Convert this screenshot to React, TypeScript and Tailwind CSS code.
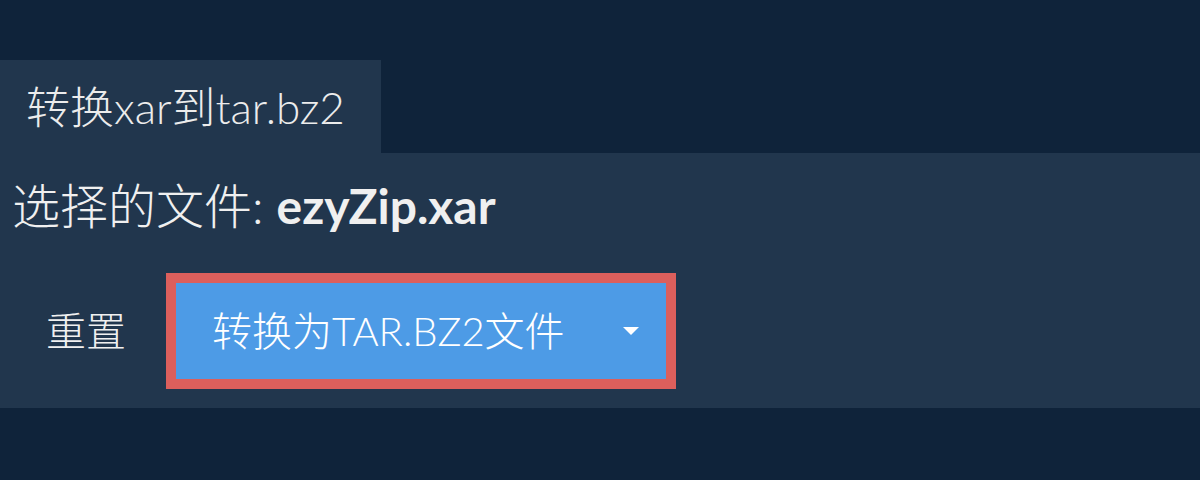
import React from "react";

const FONT = "font-['Lato','Noto_Sans_CJK_SC',sans-serif] font-light";

function Caret() {
  return (
    <svg width="16" height="8" viewBox="0 0 16 8" aria-hidden="true" className="shrink-0">
      <path d="M0 0h16L8 8z" fill="#ffffff" />
    </svg>
  );
}

export default function App() {
  return (
    <div className={`min-h-[480px] bg-[#0f233a] pt-[60px] ${FONT}`}>
      <div className="inline-flex h-[93px] items-center bg-[#21364d] pl-[26px] pr-[36px] text-[44px] text-[#ececec]">
        转换xar到tar.bz2
      </div>

      <div className="bg-[#21364d] px-3 pt-[17px] pb-[19px]">
        <div className="text-[48px] leading-[72px] text-[#f0f0f0]">
          选择的文件: <span className="font-bold">ezyZip.xar</span>
        </div>

        <div className="mt-[31px] flex items-center gap-[6px]">
          <button type="button" className="h-[96px] px-[34px] text-[40px] text-[#f0f0f0]">
            重置
          </button>

          <button
            type="button"
            className="flex h-[116px] w-[510px] items-center justify-between border-[10px] border-[#dc5f5c] bg-[#4d9be6] pl-[36px] pr-[27px] text-[40px] text-white"
          >
            <span>转换为TAR.BZ2文件</span>
            <Caret />
          </button>
        </div>
      </div>
    </div>
  );
}
